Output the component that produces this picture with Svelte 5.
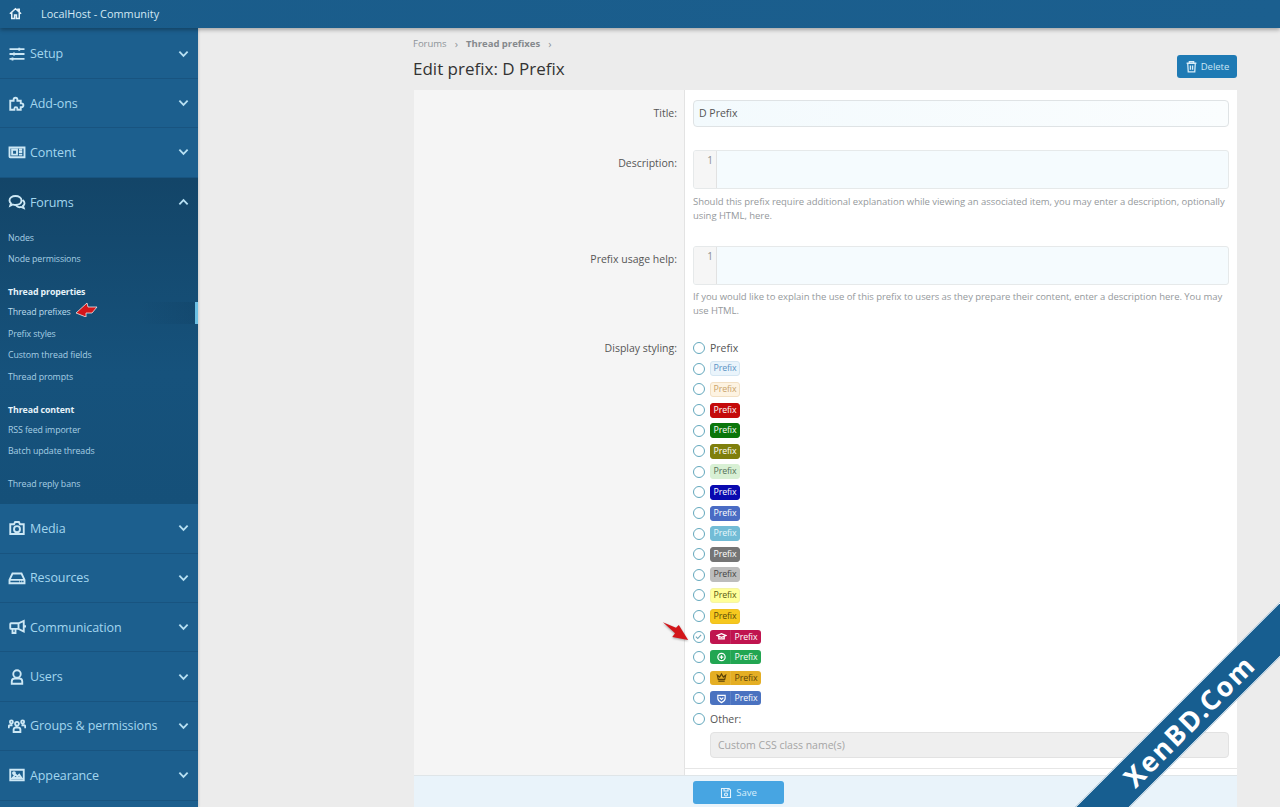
<script>
	const icons = {
		home: 'M3 12.5 12 4.5l9 8M6 10.5V20h4.5v-5.5h3V20H18v-9.5M16 7V5h2v3.8',
		setup: 'M2 5.5h20M2 12h20M2 18.5h20M15 3.5v4M8 10v4M6 16.5v4',
		addons: 'M3 9h4.5V7.5a2.5 2.5 0 1 1 5 0V9H17v3.5h1a2.5 2.5 0 1 1 0 5h-1V21h-4.5v-1.5a2 2 0 0 0-4 0V21H3z',
		content: 'M2 6h20v13H3a1 1 0 0 1-1-1zM5.5 9H12v6.5H5.5zM14.5 9H19M14.5 12H19M14.5 15.5H19',
		forums: 'M10 4c4.5 0 8 2.6 8 6s-3.5 6-8 6c-1.5 0-2.5-.2-3.5-.7L3 17l1-3.2C2.7 12.7 2 11.4 2 10c0-3.4 3.5-6 8-6zM19.5 9.5c1.6 1 2.5 2.5 2.5 4 0 1.4-.7 2.6-2 3.5l1 3-3.5-1.5c-2.5.8-5 .2-6.5-1.5',
		media: 'M3 7h5l1.5-3h5L16 7h5v13H3zM12 9.5a4 4 0 1 0 0 8 4 4 0 0 0 0-8z',
		resources: 'M2 14.5 6 6h12l4 8.5V19H2zM2 14.5h20M15 17h.8M18 17h.8',
		communication: 'M21 4v14l-7-3.5H4a1 1 0 0 1-1-1V8a1 1 0 0 1 1-1h10zM6 14.5V20h4v-5.5M14 7v7.5M23 9.5v3',
		users: 'M12 3a5 5 0 1 1 0 10 5 5 0 0 1 0-10zM5 21v-3a4 4 0 0 1 4-4h6a4 4 0 0 1 4 4v3z',
		groups: 'M12 6.5a2.5 2.5 0 1 1 0 5 2.5 2.5 0 0 1 0-5zM7.5 20v-3.5a3 3 0 0 1 3-2.5h3a3 3 0 0 1 3 2.5V20zM4.5 4.5a2 2 0 1 1 0 4 2 2 0 0 1 0-4zM19.5 4.5a2 2 0 1 1 0 4 2 2 0 0 1 0-4zM1 15v-2a2 2 0 0 1 2-2h3M23 15v-2a2 2 0 0 0-2-2h-3',
		appearance: 'M3 5h18v14H3zM6 16l4-4.5 2.5 2.5 2.5-2.500 3 4.500zM8 8.200a1.300 1.300 0 1 0 0 2.600 1.300 1.300 0 0 0 0-2.600z'
	};

	const badgeIcons = {
		cap: 'M1 5 6 3l5 2-5 2zM3 6v2.5h6V6',
		plus: 'M6 1.500a4 4 0 1 1 0 8 4 4 0 0 1 0-8zM6 3.500v4M4 5.500h4',
		crown: 'M1.500 3.500 4 5.500 6 2l2 3.500 2.500-2L9.500 8h-7zM2.500 10h7',
		shield: 'M2 2.500h8V6c0 2-2 3.500-4 4.500C4 9.500 2 8 2 6zM4 5l2 2 2-2'
	};

	const topItems = [
		{ icon: 'setup', label: 'Setup' },
		{ icon: 'addons', label: 'Add-ons' },
		{ icon: 'content', label: 'Content' }
	];
	const bottomItems = [
		{ icon: 'media', label: 'Media' },
		{ icon: 'resources', label: 'Resources' },
		{ icon: 'communication', label: 'Communication' },
		{ icon: 'users', label: 'Users' },
		{ icon: 'groups', label: 'Groups & permissions' },
		{ icon: 'appearance', label: 'Appearance' }
	];

	const prefixes = [
		{ bg: '#eaf4fb', color: '#5b93c4', border: '#d5e6f2' },
		{ bg: '#fdf3e2', color: '#c9a36a', border: '#f2e0c4' },
		{ bg: '#c40a0a', color: '#fff', border: '#c40a0a' },
		{ bg: '#0b760b', color: '#fff', border: '#0b760b' },
		{ bg: '#7f7f0c', color: '#fff', border: '#7f7f0c' },
		{ bg: '#d8f0d4', color: '#55705a', border: '#d8f0d4' },
		{ bg: '#0a0ab0', color: '#fff', border: '#0a0ab0' },
		{ bg: '#4a6cc4', color: '#fff', border: '#4a6cc4' },
		{ bg: '#72bcd6', color: '#e8f8fc', border: '#72bcd6' },
		{ bg: '#757575', color: '#fff', border: '#757575' },
		{ bg: '#bdbdbd', color: '#444', border: '#bdbdbd' },
		{ bg: '#ffff99', color: '#5a5a10', border: '#f5f5a5' },
		{ bg: '#f6c81e', color: '#5a4a08', border: '#f0c020' },
		{ bg: '#c0144f', color: '#fff', glyph: 'cap', checked: true },
		{ bg: '#22a652', color: '#fff', glyph: 'plus' },
		{ bg: '#e4ae24', color: '#5a4208', glyph: 'crown' },
		{ bg: '#4a72c0', color: '#fff', glyph: 'shield' }
	];
</script>

<header class="topbar">
	<svg class="home" viewBox="0 0 24 24"><path d={icons.home} /></svg>
	<span>LocalHost - Community</span>
</header>

<div class="layout">
	<aside class="sidebar">
		{#each topItems as item}
			<div class="nav-item">
				<svg class="nav-icon" viewBox="0 0 24 24"><path d={icons[item.icon]} /></svg>
				<span class="nav-label">{item.label}</span>
				<svg class="chev" viewBox="0 0 12 8"><path d="M1.5 1.5 6 6l4.5-4.5" /></svg>
			</div>
		{/each}

		<div class="open-section">
			<div class="nav-item">
				<svg class="nav-icon" viewBox="0 0 24 24"><path d={icons.forums} /></svg>
				<span class="nav-label">Forums</span>
				<svg class="chev" viewBox="0 0 12 8"><path d="M1.5 6.5 6 2l4.5 4.5" /></svg>
			</div>
			<div class="sub">
				<a>Nodes</a>
				<a>Node permissions</a>
				<b class="sub-head">Thread properties</b>
				<a class="active">Thread prefixes</a>
				<a>Prefix styles</a>
				<a>Custom thread fields</a>
				<a>Thread prompts</a>
				<b class="sub-head">Thread content</b>
				<a>RSS feed importer</a>
				<a>Batch update threads</a>
				<a class="gap-b">Thread reply bans</a>
			</div>
		</div>

		{#each bottomItems as item}
			<div class="nav-item">
				<svg class="nav-icon" viewBox="0 0 24 24"><path d={icons[item.icon]} /></svg>
				<span class="nav-label">{item.label}</span>
				<svg class="chev" viewBox="0 0 12 8"><path d="M1.5 1.5 6 6l4.5-4.5" /></svg>
			</div>
		{/each}
	</aside>

	<main class="main">
		<nav class="crumbs">
			<span>Forums</span><i>›</i><strong>Thread prefixes</strong><i>›</i>
		</nav>
		<div class="title-row">
			<h1>Edit prefix: D Prefix</h1>
			<button class="btn-delete">
				<svg viewBox="0 0 24 24"><path d="M3 6h18M8 6V3h8v3M5 6l1 16h12l1-16M10 10v8M14 10v8" /></svg>
				Delete
			</button>
		</div>

		<form class="block">
			<div class="row">
				<div class="label">Title:</div>
				<div class="field">
					<div class="input">D Prefix</div>
				</div>
			</div>
			<div class="row">
				<div class="label">Description:</div>
				<div class="field">
					<div class="code"><span class="gutter">1</span></div>
					<p class="hint">Should this prefix require additional explanation while viewing an associated item, you may enter a description, optionally using HTML, here.</p>
				</div>
			</div>
			<div class="row">
				<div class="label">Prefix usage help:</div>
				<div class="field">
					<div class="code"><span class="gutter">1</span></div>
					<p class="hint">If you would like to explain the use of this prefix to users as they prepare their content, enter a description here. You may use HTML.</p>
				</div>
			</div>
			<div class="row last">
				<div class="label styling">Display styling:</div>
				<div class="field">
					<div class="radio-row">
						<span class="radio"></span><span class="plain">Prefix</span>
					</div>
					{#each prefixes as p}
						<div class="radio-row">
							<span class="radio">
								{#if p.checked}
									<svg viewBox="0 0 12 12"><path d="M2.5 6.2 5 8.7l4.5-5" /></svg>
								{/if}
							</span>
							{#if p.glyph}
								<span class="badge wide" style="background:{p.bg};color:{p.color}">
									<svg class="glyph" viewBox="0 0 12 12" style="stroke:{p.color}"><path d={badgeIcons[p.glyph]} /></svg>
									<span class="wide-text">Prefix</span>
								</span>
							{:else}
								<span class="badge" style="background:{p.bg};color:{p.color};border-color:{p.border}">Prefix</span>
							{/if}
						</div>
					{/each}
					<div class="radio-row">
						<span class="radio"></span><span class="plain">Other:</span>
					</div>
					<div class="input other">Custom CSS class name(s)</div>
				</div>
			</div>
			<div class="submit">
				<button type="button" class="btn-save">
					<svg viewBox="0 0 24 24"><path d="M3 3h15l3 3v15H3zM8 3v5h8V3M12 12a3 3 0 1 0 0 6 3 3 0 0 0 0-6z" /></svg>
					Save
				</button>
			</div>
		</form>
	</main>
</div>

<!-- red annotation arrows and the watermark sit on top of the screenshot -->
<svg class="arrow arrow-side" viewBox="0 0 22 15"><path d="M0 11 11 1l1 4 9 0-5 6-6 0 0 4z" /></svg>
<svg class="arrow arrow-radio" viewBox="0 0 30 22"><path d="M1 1l14 6 3-3 10 16-17-3 3-4z" /></svg>
<div class="ribbon">XenBD.Com</div>

<style>
	:global(body) {
		margin: 0;
		height: 807px;
		overflow: hidden;
		position: relative;
		background: #ececec;
		font-family: 'Open Sans', 'Noto Sans', sans-serif;
	}

	.topbar {
		height: 27px;
		padding-bottom: 1px;
		display: flex;
		align-items: center;
		gap: 18px;
		padding-left: 8px;
		background: linear-gradient(90deg, #1a5c8a, #1b5f8f);
		color: #d2e8f4;
		font-size: 10.9px;
		box-shadow: 0 2px 4px rgba(0, 0, 0, 0.3);
		position: relative;
		z-index: 1;
	}

	.home {
		width: 15px;
		height: 15px;
		fill: none;
		stroke: #e4f2f9;
		stroke-width: 2.4;
	}

	.layout {
		display: flex;
		height: 779px;
	}

	.sidebar {
		width: 198px;
		flex: none;
		padding-top: 1.5px;
		background: #1c5f8e;
		box-shadow: 1px 0 2px rgba(0, 0, 0, 0.12);
	}

	.nav-item {
		height: 49.4px;
		box-sizing: border-box;
		display: flex;
		align-items: center;
		padding: 0 8px;
		border-bottom: 1px solid rgba(20, 72, 110, 0.45);
		color: #a3d6ee;
	}

	.nav-icon {
		width: 18px;
		height: 18px;
		flex: none;
		fill: none;
		stroke: #cde8f5;
		stroke-width: 2.5;
	}

	.nav-label {
		margin-left: 4px;
		font-size: 12.5px;
		letter-spacing: -0.1px;
	}

	.chev {
		width: 11px;
		height: 8px;
		margin-left: auto;
		margin-right: 1px;
		fill: none;
		stroke: #b7e0f3;
		stroke-width: 2;
	}

	.open-section {
		height: 326.5px;
		background: linear-gradient(180deg, #134568 0%, #16527c 60%, #155079 100%);
	}

	.open-section .nav-item {
		border-bottom: 0;
	}

	.sub {
		display: flex;
		flex-direction: column;
		padding-top: 0.5px;
		font-size: 8.8px;
		color: #a6cfe4;
	}

	.sub a {
		height: 21.7px;
		line-height: 21.7px;
		padding-left: 8px;
		letter-spacing: -0.1px;
	}

	.gap-b {
		margin-top: 11px;
	}

	.sub-head {
		margin-top: 11px;
		height: 20px;
		line-height: 20px;
		padding-left: 8px;
		color: #e6f3fa;
		font-weight: 700;
		letter-spacing: -0.1px;
	}

	.sub a.active {
		color: #bcdcec;
		box-shadow: inset -3px 0 0 #6cc0e4;
		background: linear-gradient(90deg, transparent 70%, rgba(12, 50, 80, 0.18));
	}

	.main {
		flex: 1;
		padding: 0 43px 0 216px;
		min-width: 0;
	}

	.crumbs {
		display: flex;
		align-items: center;
		height: 30px;
		font-size: 9.5px;
		color: #8e9499;
		margin-left: -1px;
	}

	.crumbs i {
		font-style: normal;
		margin: 0 8px;
		font-size: 11px;
	}

	.crumbs strong {
		font-weight: 700;
		color: #85898d;
	}

	.title-row {
		display: flex;
		justify-content: space-between;
		align-items: center;
		height: 20px;
		margin: 0 0 12px -1px;
	}

	h1 {
		margin: 0;
		font-size: 17px;
		font-weight: 400;
		color: #333;
	}

	.btn-delete {
		width: 60px;
		height: 23px;
		margin-top: -3px;
		flex: none;
		border: 0;
		border-radius: 3px;
		background: #1e7ab4;
		color: #cbe6f5;
		font: inherit;
		font-size: 9.5px;
		display: flex;
		align-items: center;
		justify-content: center;
		gap: 3px;
		padding: 0;
	}

	.btn-delete svg {
		width: 13px;
		height: 13px;
		fill: none;
		stroke: #d7ecf7;
		stroke-width: 2.4;
	}

	.block {
		background: #fff;
	}

	.row {
		display: grid;
		grid-template-columns: 270px 1fr;
		background: linear-gradient(90deg, #f5f5f5 270px, #e3e3e3 270px, #e3e3e3 271px, #fff 271px);
	}

	.label {
		padding: 16px 7px 0 0;
		text-align: right;
		font-size: 10.5px;
		color: #555;
	}

	.field {
		padding: 10px 8px 13px 9px;
	}

	.input {
		box-sizing: border-box;
		height: 27px;
		line-height: 25px;
		padding: 0 5px;
		border: 1px solid #dfe3e5;
		border-radius: 4px;
		background: linear-gradient(90deg, #f3fafd, #fafdfe);
		font-size: 10.5px;
		color: #555;
	}

	.code {
		box-sizing: border-box;
		height: 39px;
		border: 1px solid #e6e9ea;
		border-radius: 3px;
		background: #f5fbfe;
		overflow: hidden;
	}

	.gutter {
		display: block;
		box-sizing: border-box;
		width: 23px;
		height: 100%;
		padding: 2px 3px 0 0;
		text-align: right;
		background: #f6f6f6;
		border-right: 1px solid #e2e2e2;
		font-size: 10px;
		color: #8e8e8e;
	}

	.hint {
		margin: 5.5px 0 0;
		font-size: 9.5px;
		line-height: 14px;
		color: #95999c;
		letter-spacing: -0.05px;
	}

	.styling {
		padding-top: 10px;
	}

	.last {
		height: 444px;
	}

	.last .field {
		box-sizing: border-box;
		height: 438px;
		padding-top: 7px;
		padding-bottom: 0;
		border-bottom: 1px solid #e6e6e6;
	}

	.radio-row {
		display: flex;
		align-items: center;
		height: 20.6px;
	}

	.radio {
		box-sizing: border-box;
		width: 12px;
		height: 12px;
		border: 1.5px solid #64a8bd;
		border-radius: 50%;
		margin-right: 5px;
		flex: none;
		display: flex;
	}

	.radio svg {
		width: 9px;
		height: 9px;
		fill: none;
		stroke: #6fa6b8;
		stroke-width: 1.5;
	}

	.plain {
		font-size: 10.5px;
		color: #555;
	}

	.badge {
		box-sizing: border-box;
		width: 30px;
		height: 15px;
		line-height: 13px;
		border: 1px solid transparent;
		border-radius: 3px;
		text-align: center;
		font-size: 8.8px;
		letter-spacing: -0.1px;
	}

	.badge.wide {
		width: 51px;
		height: 14px;
		display: flex;
		border: 0;
		line-height: 14px;
	}

	.glyph {
		width: 11px;
		height: 11px;
		margin: 1.5px 3px 0 6px;
		flex: none;
		fill: none;
		stroke-width: 1.3;
	}

	.wide-text {
		flex: 1;
		border-left: 1px solid rgba(255, 255, 255, 0.1);
	}

	.input.other {
		margin: 3px 0 0 17px;
		width: 519px;
		height: 26px;
		background: #efefef;
		border-color: #e2e2e2;
		color: #a5a5a5;
		font-size: 10.5px;
		line-height: 24px;
		padding-left: 7px;
	}

	.submit {
		height: 32px;
		box-sizing: border-box;
		border-top: 1px solid #dfe5e8;
		background: #e9f3fa;
		padding: 5px 0 0 279px;
	}

	.btn-save {
		width: 91px;
		height: 23px;
		border: 0;
		border-radius: 3px;
		background: #47a5e2;
		color: #d8eefb;
		font: inherit;
		font-size: 9.5px;
		display: flex;
		align-items: center;
		justify-content: center;
		gap: 4px;
		padding: 0;
	}

	.btn-save svg {
		width: 12px;
		height: 12px;
		fill: none;
		stroke: #e4f3fc;
		stroke-width: 2.2;
	}

	.arrow {
		position: absolute;
		fill: #d3161a;
		stroke: #f3e9e9;
		stroke-width: 0.8;
	}

	.arrow-side {
		left: 76px;
		top: 302px;
		width: 22px;
		height: 15px;
	}

	.arrow-radio {
		left: 662px;
		top: 621px;
		width: 28px;
		height: 21px;
		stroke: none;
		filter: drop-shadow(0 1px 1px rgba(0, 0, 0, 0.35));
	}

	.ribbon {
		position: absolute;
		left: 1029px;
		top: 701px;
		width: 320px;
		height: 37px;
		line-height: 37px;
		transform: rotate(-45deg);
		background: #175e90;
		border-top: 1.5px solid #fff;
		border-bottom: 1.5px solid #fff;
		text-align: center;
		color: #fff;
		font-family: 'Noto Sans', sans-serif;
		font-size: 27px;
		font-weight: 700;
		letter-spacing: 2px;
	}
</style>
